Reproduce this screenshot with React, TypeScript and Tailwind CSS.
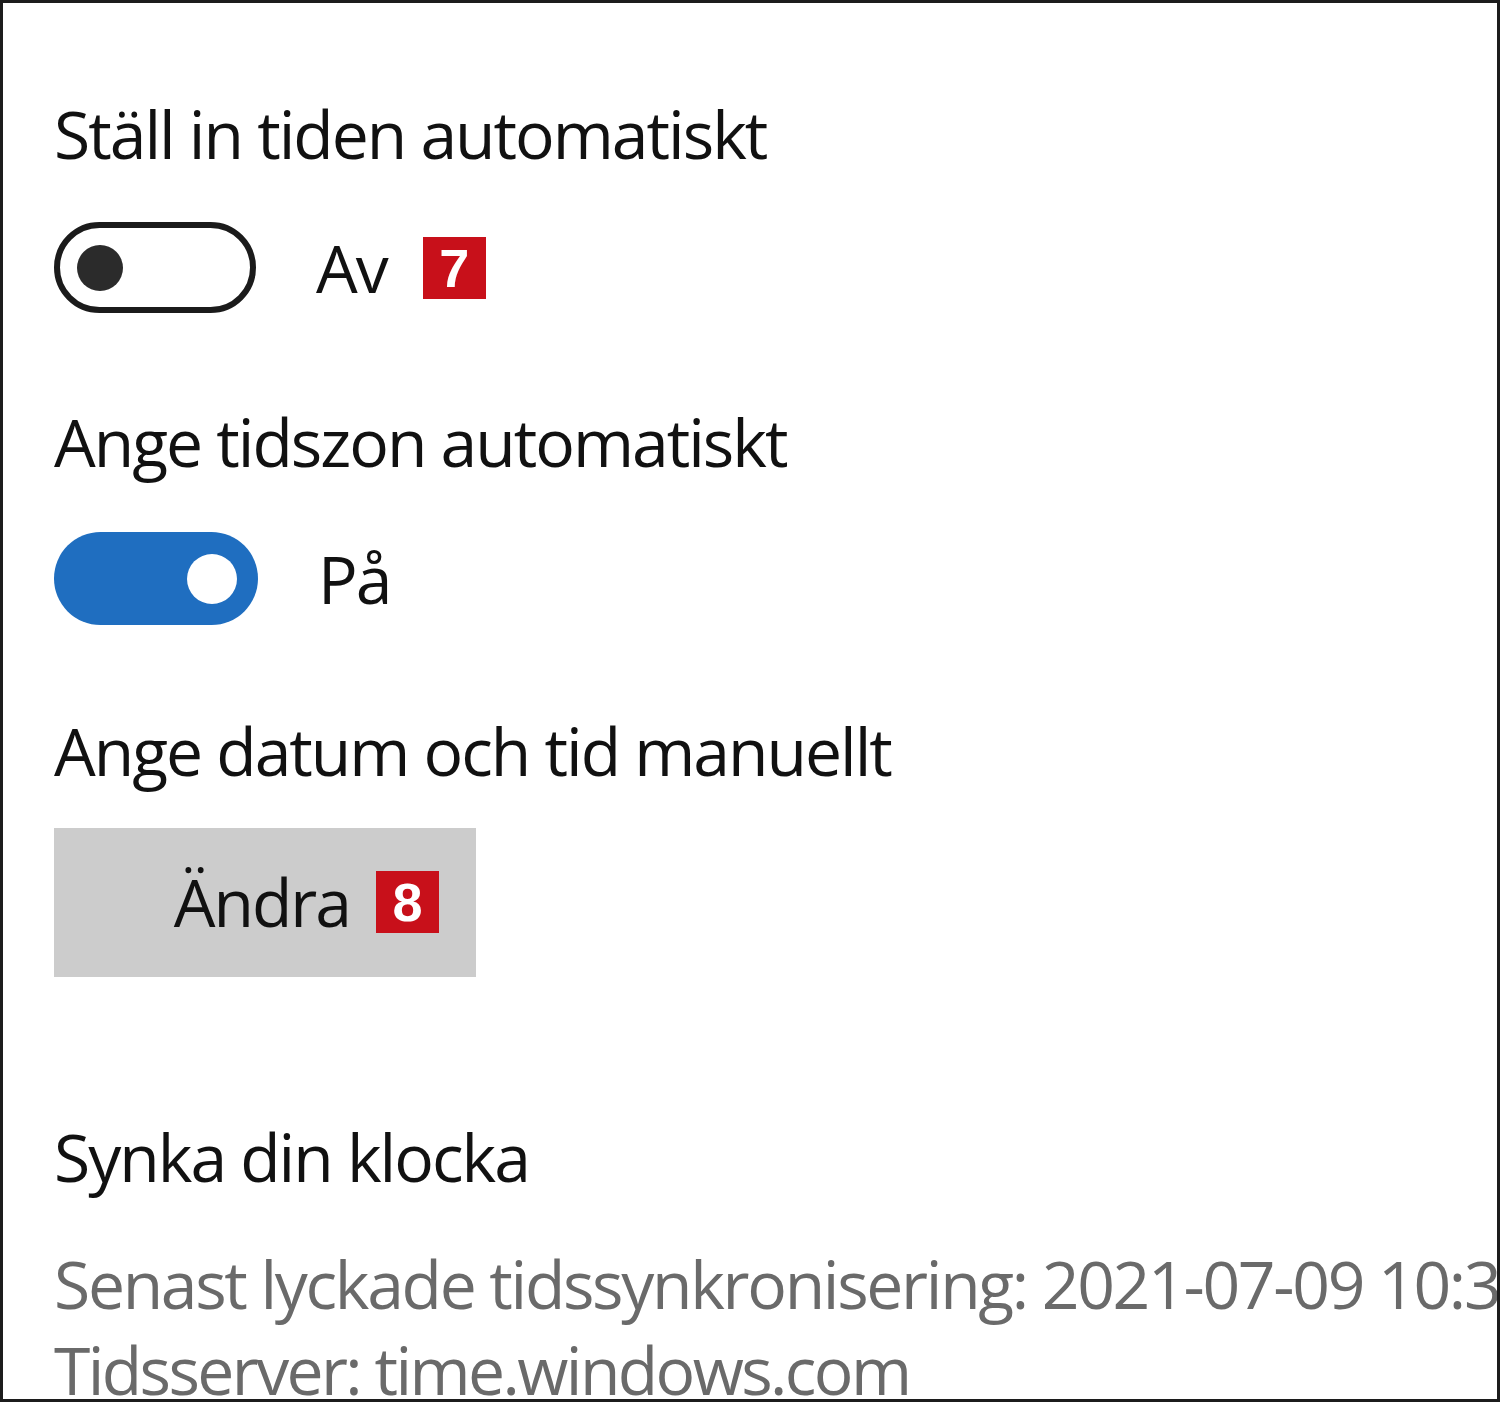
import React from 'react';

function Badge({ n }: { n: string }) {
  return <span className="inline-flex items-center justify-center w-[63px] h-[62px] bg-[#c8101a] text-white text-[54px] font-bold leading-none tracking-normal font-['Liberation_Sans',sans-serif]">{n}</span>;
}

function Toggle({ on }: { on: boolean }) {
  if (on) {
    return <div className="w-[204px] h-[93px] rounded-full bg-[#1f6ec0] flex items-center justify-end pr-[21px]"><div className="w-[50px] h-[50px] rounded-full bg-white" /></div>;
  }
  return <div className="w-[202px] h-[91px] rounded-full border-[6px] border-[#1b1b1b] bg-white flex items-center pl-[17px]"><div className="w-[46px] h-[46px] rounded-full bg-[#2b2b2b]" /></div>;
}

export default function App() {
  return <div className="w-[1500px] h-[1402px] bg-white border-[3px] border-[#1c1c1c] overflow-hidden pl-[51px] font-['Open_Sans',sans-serif] text-[66px] leading-[1.2] tracking-[-2px] text-[#111]">
    <div className="pt-[91px]">Ställ in tiden automatiskt</div>
    <div className="flex items-center mt-[49px] gap-[60px]">
      <Toggle on={false} />
      <div className="flex items-center gap-[36px]"><span>Av</span><Badge n="7" /></div>
    </div>
    <div className="mt-[89px]">Ange tidszon automatiskt</div>
    <div className="flex items-center mt-[51px] gap-[60px]">
      <Toggle on />
      <span>På</span>
    </div>
    <div className="mt-[86px]">Ange datum och tid manuellt</div>
    <div className="mt-[37px] w-[422px] h-[149px] bg-[#cccccc] flex items-center justify-end pr-[37px] gap-[26px]">
      <span>Ändra</span><Badge n="8" />
    </div>
    <div className="mt-[140px]">Synka din klocka</div>
    <div className="mt-[44px] text-[#6a6a6a] whitespace-nowrap leading-[86px] tracking-[-2.3px]">Senast lyckade tidssynkronisering: 2021-07-09 10:33</div>
    <div className="text-[#6a6a6a] whitespace-nowrap leading-[86px] tracking-[-2.6px]">Tidsserver: time.windows.com</div>
  </div>;
}
